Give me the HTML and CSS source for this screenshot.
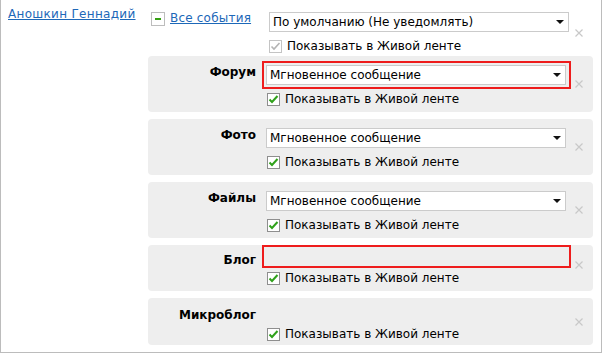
FILE: index.html
```html
<!DOCTYPE html>
<html lang="ru">
<head>
    <meta charset="UTF-8">
    <title>Подписка на события</title>
    <link rel="stylesheet" href="styles.css">
</head>
<body>
    <div class="frame">
        <div class="user">
            <a href="#" class="link">Аношкин Геннадий</a>
        </div>
        <div class="events">
            <div class="row-all">
                <div class="all-head">
                    <span class="minus"></span>
                    <a href="#" class="link">Все события</a>
                </div>
                <div class="all-body">
                    <div class="sel">
                        <select class="select select-top">
                            <option>По умолчанию (Не уведомлять)</option>
                        </select>
                    </div>
                    <label class="check check-top">
                        <span class="checkbox disabled">
                            <svg width="11" height="11" viewBox="0 0 11 11"><path d="M1.5 5.5 L4 8 L9.5 2" fill="none" stroke="#b4b4b4" stroke-width="1.6"/></svg>
                        </span>
                        Показывать в Живой ленте
                    </label>
                </div>
                <span class="remove">
                    <svg width="8" height="8" viewBox="0 0 8 8"><path d="M0.5 0.5 L7.5 7.5 M7.5 0.5 L0.5 7.5" stroke="#c8c8c8" stroke-width="1.2"/></svg>
                </span>
            </div>

            <div class="group">
                <div class="group-label">Форум</div>
                <div class="group-body">
                    <div class="field error">
                        <div class="sel">
                            <select class="select"><option>Мгновенное сообщение</option></select>
                        </div>
                    </div>
                    <label class="check">
                        <span class="checkbox"><svg width="11" height="11" viewBox="0 0 11 11"><path d="M1.5 5.5 L4 8 L9.5 2" fill="none" stroke="#2fa11a" stroke-width="2"/></svg></span>
                        Показывать в Живой ленте
                    </label>
                </div>
                <span class="remove"><svg width="8" height="8" viewBox="0 0 8 8"><path d="M0.5 0.5 L7.5 7.5 M7.5 0.5 L0.5 7.5" stroke="#c8c8c8" stroke-width="1.2"/></svg></span>
            </div>

            <div class="group">
                <div class="group-label">Фото</div>
                <div class="group-body">
                    <div class="field">
                        <div class="sel">
                            <select class="select"><option>Мгновенное сообщение</option></select>
                        </div>
                    </div>
                    <label class="check">
                        <span class="checkbox"><svg width="11" height="11" viewBox="0 0 11 11"><path d="M1.5 5.5 L4 8 L9.5 2" fill="none" stroke="#2fa11a" stroke-width="2"/></svg></span>
                        Показывать в Живой ленте
                    </label>
                </div>
                <span class="remove"><svg width="8" height="8" viewBox="0 0 8 8"><path d="M0.5 0.5 L7.5 7.5 M7.5 0.5 L0.5 7.5" stroke="#c8c8c8" stroke-width="1.2"/></svg></span>
            </div>

            <div class="group">
                <div class="group-label">Файлы</div>
                <div class="group-body">
                    <div class="field">
                        <div class="sel">
                            <select class="select"><option>Мгновенное сообщение</option></select>
                        </div>
                    </div>
                    <label class="check">
                        <span class="checkbox"><svg width="11" height="11" viewBox="0 0 11 11"><path d="M1.5 5.5 L4 8 L9.5 2" fill="none" stroke="#2fa11a" stroke-width="2"/></svg></span>
                        Показывать в Живой ленте
                    </label>
                </div>
                <span class="remove"><svg width="8" height="8" viewBox="0 0 8 8"><path d="M0.5 0.5 L7.5 7.5 M7.5 0.5 L0.5 7.5" stroke="#c8c8c8" stroke-width="1.2"/></svg></span>
            </div>

            <div class="group group-blog">
                <div class="group-label">Блог</div>
                <div class="group-body">
                    <div class="field error field-empty"></div>
                    <label class="check">
                        <span class="checkbox"><svg width="11" height="11" viewBox="0 0 11 11"><path d="M1.5 5.5 L4 8 L9.5 2" fill="none" stroke="#2fa11a" stroke-width="2"/></svg></span>
                        Показывать в Живой ленте
                    </label>
                </div>
                <span class="remove"><svg width="8" height="8" viewBox="0 0 8 8"><path d="M0.5 0.5 L7.5 7.5 M7.5 0.5 L0.5 7.5" stroke="#c8c8c8" stroke-width="1.2"/></svg></span>
            </div>

            <div class="group group-micro">
                <div class="group-label">Микроблог</div>
                <div class="group-body">
                    <div class="field field-none"></div>
                    <label class="check">
                        <span class="checkbox"><svg width="11" height="11" viewBox="0 0 11 11"><path d="M1.5 5.5 L4 8 L9.5 2" fill="none" stroke="#2fa11a" stroke-width="2"/></svg></span>
                        Показывать в Живой ленте
                    </label>
                </div>
                <span class="remove"><svg width="8" height="8" viewBox="0 0 8 8"><path d="M0.5 0.5 L7.5 7.5 M7.5 0.5 L0.5 7.5" stroke="#c8c8c8" stroke-width="1.2"/></svg></span>
            </div>
        </div>
    </div>
</body>
</html>
```

FILE: styles.css
```css
body {
    margin: 0;
    font-family: "DejaVu Sans", Verdana, sans-serif;
    font-size: 12px;
    line-height: 15px;
    color: #000;
    background-color: white;
}
.frame {
    display: flex;
    width: 602px;
    height: 353px;
    box-sizing: border-box;
    border: 1px solid #bcbcbc;
    border-top: none;
}
.user {
    width: 147px;
    flex-shrink: 0;
    padding: 7px 0 0 7px;
    box-sizing: border-box;
    letter-spacing: 0.3px;
}
.link {
    color: #1d68b8;
    text-decoration: underline;
}
.events {
    width: 445px;
    flex-shrink: 0;
}

/* "all events" row */
.row-all {
    display: flex;
    align-items: center;
    padding: 12px 0 3px 0;
}
.all-head {
    display: flex;
    align-items: flex-start;
    width: 121px;
    flex-shrink: 0;
    align-self: flex-start;
}
.minus {
    width: 12px;
    height: 12px;
    margin: 0 5px 0 3px;
    border: 1px solid #bdbdbd;
    background-color: white;
    position: relative;
}
.minus::after {
    content: "";
    position: absolute;
    left: 3px;
    top: 5px;
    width: 6px;
    height: 2px;
    background-color: #35a012;
}
.all-head .link {
    margin-top: -1px;
    letter-spacing: 0.2px;
}
.all-body {
    width: 300px;
    flex-shrink: 0;
}
.select-top {
    height: 20px;
    padding-left: 5px;
}
.check-top {
    margin: 7px 0 0 0;
}
.row-all .remove {
    margin-left: 6px;
}

/* groups */
.group {
    display: flex;
    align-items: center;
    background-color: #eeeeee;
    border-radius: 4px;
    padding: 5px 10px 6px 0;
    margin-bottom: 7px;
}
.group-label {
    width: 108px;
    flex-shrink: 0;
    align-self: flex-start;
    padding-top: 4px;
    text-align: right;
    font-weight: bold;
}
.group-body {
    margin-left: 6px;
    flex-shrink: 0;
}
.field {
    width: 301px;
    padding: 2px;
    border: 2px solid transparent;
}
.field.error {
    border-color: #ee1c1c;
}
.field-empty {
    height: 15px;
}
.field-none {
    height: 13px;
}
.group-blog {
    padding-top: 0;
}
.group-blog .group-label {
    padding-top: 8px;
}
.group-micro {
    padding-bottom: 4px;
}
.group-micro .group-label {
    padding-top: 5px;
}
.group .check {
    margin: 3px 0 0 5px;
}

/* select */
.sel {
    position: relative;
    width: 300px;
}
.sel::after {
    content: "";
    position: absolute;
    right: 5px;
    top: 50%;
    margin-top: -2px;
    border-left: 4px solid transparent;
    border-right: 4px solid transparent;
    border-top: 4px solid #111;
}
.select {
    appearance: none;
    -webkit-appearance: none;
    display: block;
    width: 300px;
    height: 20px;
    padding: 0 20px 0 3px;
    border: 1px solid #cbcbcb;
    border-radius: 0;
    background-color: white;
    font-family: "DejaVu Sans", Verdana, sans-serif;
    font-size: 12px;
    color: #000;
}

/* checkbox row */
.check {
    display: flex;
    align-items: center;
    height: 14px;
    gap: 5px;
}
.checkbox {
    display: flex;
    align-items: center;
    justify-content: center;
    width: 11px;
    height: 11px;
    border: 1px solid #8e8e8e;
    background-color: white;
}
.checkbox.disabled {
    border-color: #c4c4c4;
}

.remove {
    display: flex;
    flex-shrink: 0;
    width: 8px;
    height: 8px;
    margin-left: 4px;
}
```
